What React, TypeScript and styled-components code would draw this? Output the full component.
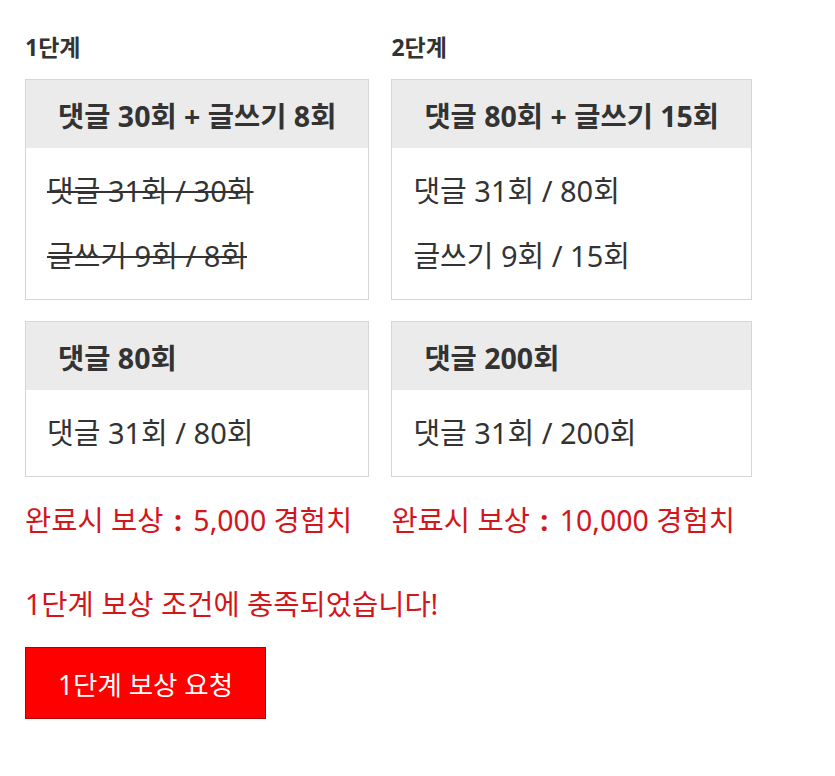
import React from "react";
import styled, { createGlobalStyle } from "styled-components";

const GlobalStyle = createGlobalStyle`
  html, body {
    margin: 0;
    padding: 0;
    background: #ffffff;
  }
  body {
    font-family: "Noto Sans", "Noto Sans CJK KR", sans-serif;
    color: #333333;
  }
`;

const Page = styled.div`
  padding: 26px 25px 40px;
`;

const Columns = styled.div`
  display: flex;
  align-items: flex-start;
  gap: 22px;
`;

const Column = styled.div`
  display: flex;
  flex-direction: column;
`;

const StageLabel = styled.div`
  font-size: 23px;
  font-weight: 700;
  line-height: 42px;
  color: #333333;
  margin-bottom: 11px;
`;

const Card = styled.div`
  border: 1px solid #d6d6d6;
  background: #ffffff;
  & + & {
    margin-top: 21px;
  }
`;

const CardHeader = styled.div<{ $align: "center" | "left" }>`
  background: #ebebeb;
  height: 68px;
  display: flex;
  align-items: center;
  justify-content: ${(p) => (p.$align === "center" ? "center" : "flex-start")};
  padding: 0 32px;
  font-size: 28.5px;
  font-weight: 700;
  color: #333333;
  white-space: nowrap;
`;

const CardBody = styled.div`
  padding: 10px 21px 11px;
`;

const Progress = styled.div<{ $done?: boolean }>`
  font-size: 29px;
  line-height: 65px;
  color: #333333;
  white-space: nowrap;
  text-decoration: ${(p) => (p.$done ? "line-through" : "none")};
  text-decoration-thickness: 2px;
`;

const Reward = styled.div`
  margin-top: 18px;
  font-size: 28.5px;
  line-height: 50px;
  color: #d3161c;
  white-space: nowrap;
`;

/* the colon between "보상" and the amount sits a little apart from both */
const Colon = styled.span`
  display: inline-block;
  margin: 0 4px 0 3px;
  font-weight: 700;
`;

const Notice = styled.div`
  margin-top: 39px;
  font-size: 28.5px;
  line-height: 40px;
  color: #d3161c;
`;

const ClaimButton = styled.button`
  margin-top: 23px;
  width: 241px;
  height: 72px;
  background: #ff0000;
  border: 1px solid #b00000;
  color: #ffffff;
  font-family: "Noto Sans", "Noto Sans CJK KR", sans-serif;
  font-size: 26.5px;
  cursor: pointer;
  padding: 0;
`;

type Stage = {
  label: string;
  combo: string;
  progress: { text: string; done: boolean }[];
  commentGoal: string;
  commentProgress: string;
  reward: string;
};

const stages: Stage[] = [
  {
    label: "1단계",
    combo: "댓글 30회 + 글쓰기 8회",
    progress: [
      { text: "댓글 31회 / 30회", done: true },
      { text: "글쓰기 9회 / 8회", done: true },
    ],
    commentGoal: "댓글 80회",
    commentProgress: "댓글 31회 / 80회",
    reward: "5,000 경험치",
  },
  {
    label: "2단계",
    combo: "댓글 80회 + 글쓰기 15회",
    progress: [
      { text: "댓글 31회 / 80회", done: false },
      { text: "글쓰기 9회 / 15회", done: false },
    ],
    commentGoal: "댓글 200회",
    commentProgress: "댓글 31회 / 200회",
    reward: "10,000 경험치",
  },
];

export default function App() {
  return (
    <>
      <GlobalStyle />
      <Page>
        <Columns>
          {stages.map((s) => (
            <Column key={s.label}>
              <StageLabel>{s.label}</StageLabel>
              <Card>
                <CardHeader $align="center">{s.combo}</CardHeader>
                <CardBody>
                  {s.progress.map((p) => (
                    <Progress key={p.text} $done={p.done}>
                      {p.text}
                    </Progress>
                  ))}
                </CardBody>
              </Card>
              <Card>
                <CardHeader $align="left">{s.commentGoal}</CardHeader>
                <CardBody>
                  <Progress>{s.commentProgress}</Progress>
                </CardBody>
              </Card>
              <Reward>
                완료시 보상 <Colon>:</Colon> {s.reward}
              </Reward>
            </Column>
          ))}
        </Columns>
        <Notice>1단계 보상 조건에 충족되었습니다!</Notice>
        <ClaimButton>1단계 보상 요청</ClaimButton>
      </Page>
    </>
  );
}
